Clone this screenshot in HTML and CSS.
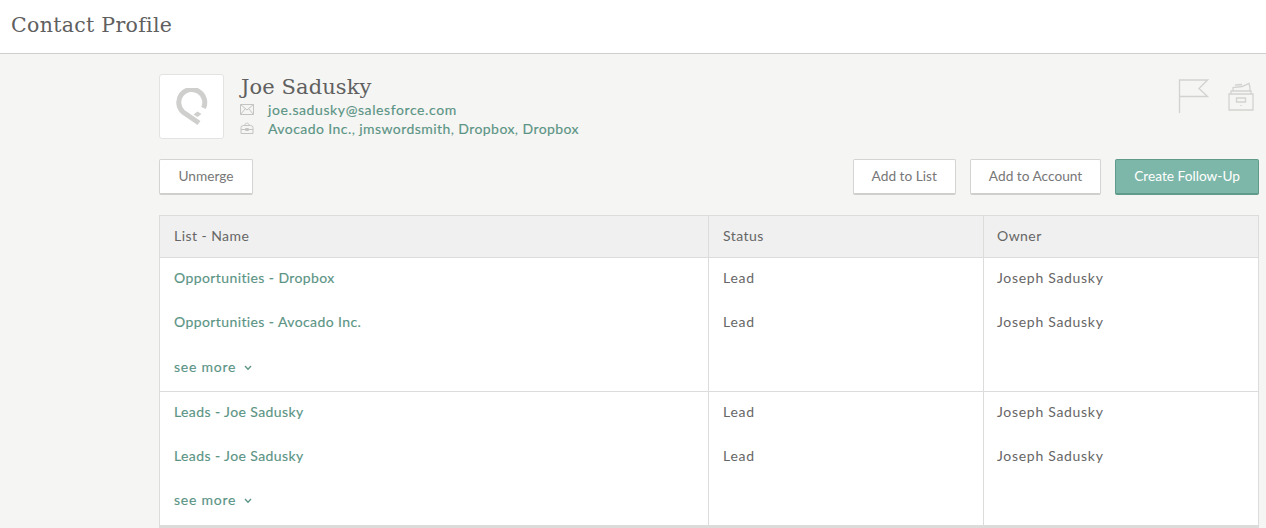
FILE: index.html
```html
<!DOCTYPE html>
<html lang="en">
<head>
<meta charset="utf-8">
<title>Contact Profile</title>
<link rel="stylesheet" href="styles.css">
</head>
<body>
<header class="topbar"><h1>Contact Profile</h1></header>
<main class="main">
  <section class="profile">
    <div class="avatar">
      <svg width="34" height="38" viewBox="0 0 34 38" fill="none">
        <path d="M24 35 L8 24 A13 13 0 1 1 28.500 20" stroke="#cfcfcd" stroke-width="5"/>
        <path d="M18.500 26.500 L22.500 23.500 L26.500 26 L22.500 29 Z" fill="#cfcfcd"/>
      </svg>
    </div>
    <div class="identity">
      <h2>Joe Sadusky</h2>
      <div class="line email">
        <svg class="small-icon" width="14" height="11" viewBox="0 0 14 11" fill="none" stroke="#c4c4c2"><path d="M.5 .5h13v10H.5z M.5 .5 7 6l6.500-5.500 M.5 10.500 5.300 4.600 M13.500 10.500 8.700 4.600"/></svg>
        <a>joe.sadusky@salesforce.com</a>
      </div>
      <div class="line">
        <svg class="small-icon" width="13" height="12" viewBox="0 0 13 12" fill="none" stroke="#c4c4c2"><path d="M.5 5.500Q.5 3.500 3 3.500h7q2.500 0 2.500 2v6H.5z M.5 7.500h12 M3.500 3.500 6 1h1L9.500 3.500 M5 6.500h3v2H5z"/></svg>
        <span class="links"><a>Avocado Inc.</a>, <a>jmswordsmith</a>, <a>Dropbox</a>, <a>Dropbox</a></span>
      </div>
    </div>
    <div class="status-icons">
      <svg width="31" height="34" viewBox="0 0 31 34" fill="none" stroke="#d2d2d0" stroke-width="1.300"><path d="M1.500 34V1H29.500L21 9.500 29.500 17.500H1.500"/></svg>
      <svg width="26" height="29" viewBox="0 0 26 29" fill="none" stroke="#d2d2d0" stroke-width="1.300"><path d="M1 12h24v16H1z M3 12V9h20v3 M5 9V5.500l9-1 7-3 1 4V9 M7 3l7-.500 M8.500 16h9v4h-9z M13 23v1"/></svg>
    </div>
  </section>
  <section class="actions">
    <button class="btn unmerge">Unmerge</button>
    <div class="actions-right">
      <button class="btn">Add to List</button>
      <button class="btn">Add to Account</button>
      <button class="btn primary">Create Follow-Up</button>
    </div>
  </section>
  <section class="table">
    <div class="row head"><div>List - Name</div><div>Status</div><div>Owner</div></div>
    <div class="group">
      <div class="row"><div><a>Opportunities - Dropbox</a></div><div>Lead</div><div>Joseph Sadusky</div></div>
      <div class="row"><div><a>Opportunities - Avocado Inc.</a></div><div>Lead</div><div>Joseph Sadusky</div></div>
      <div class="row more"><div><a class="see">see more <svg width="8" height="6" viewBox="0 0 8 6" fill="none" stroke="#5b9485" stroke-width="1.300"><path d="M1 1 4 4.300 7 1"/></svg></a></div><div></div><div></div></div>
    </div>
    <div class="group last">
      <div class="row"><div><a>Leads - Joe Sadusky</a></div><div>Lead</div><div>Joseph Sadusky</div></div>
      <div class="row"><div><a>Leads - Joe Sadusky</a></div><div>Lead</div><div>Joseph Sadusky</div></div>
      <div class="row more"><div><a class="see">see more <svg width="8" height="6" viewBox="0 0 8 6" fill="none" stroke="#5b9485" stroke-width="1.300"><path d="M1 1 4 4.300 7 1"/></svg></a></div><div></div><div></div></div>
    </div>
  </section>
</main>
</body>
</html>
```
FILE: styles.css
```css
* { box-sizing: border-box; }
html, body { margin: 0; height: 100%; overflow: hidden; }
body { background: #f5f5f3; font-family: Lato, "Liberation Sans", sans-serif; color: #555; }
.topbar { height: 54px; background: #fff; border-bottom: 1px solid #cfcfcd; padding: 11px 0 0 11px; }
h1, h2 { margin: 0; font-family: "DejaVu Serif", serif; font-weight: 400; color: #606060; }
h1 { font-size: 20.500px; line-height: 28px; letter-spacing: .3px; }
h2 { font-size: 21px; line-height: 26px; letter-spacing: .1px; padding-left: 1px; }
a { color: #5b9485; -webkit-text-stroke: .15px #5b9485; }
.main { padding: 20px 7px 0 159px; }
.profile { display: flex; height: 65px; }
.avatar { width: 65px; height: 65px; background: #fff; border: 1px solid #e3e3e1; border-radius: 3px; display: flex; align-items: center; justify-content: center; }
.identity { margin-left: 16px; flex: 1; }
.line { display: flex; align-items: center; height: 18px; font-size: 14px; letter-spacing: .43px; }
.line + .line { margin-top: 1px; }
.email { letter-spacing: .6px; }
.small-icon { width: 14px; margin-right: 14px; flex: none; }
.links { color: #5b9485; }
.status-icons { display: flex; align-items: flex-start; gap: 19px; padding-top: 5px; }
.status-icons svg:last-child { margin-right: 5px; margin-top: 3px; }
.actions { display: flex; justify-content: space-between; margin-top: 20px; }
.actions-right { display: flex; gap: 14px; }
.btn { height: 36px; padding: 0 18px 2px; background: #fff; border: 1px solid #d4d4d2; border-bottom: 2px solid #cfcfcd; border-radius: 2px; font: 400 13.700px Lato, "Liberation Sans", sans-serif; color: #777; }
.unmerge { padding: 0 18.500px 2px; }
.primary { background: #7db7a9; border-color: #5f9a8b; color: #fff; }
.table { margin-top: 20px; border: 1px solid #dcdcda; border-bottom: 3px solid #dcdcda; background: #fff; font-size: 14px; letter-spacing: .7px; color: #666; }
.row { display: grid; grid-template-columns: 549px 275px 1fr; }
.row > div { padding: 10px 14px 14px; line-height: 20px; border-right: 1px solid #dcdcda; }
.row > div:last-child { border-right: 0; padding-left: 13px; }
.head { background: #f0f0f0; border-bottom: 1px solid #dcdcda; letter-spacing: .45px; }
.head > div { padding: 10px 14px 11px; }
.group + .group { border-top: 1px solid #dcdcda; }
.more > div { padding-top: 11px; }
.last .more > div { padding-top: 10px; padding-bottom: 15px; }
.see svg { margin-left: 4px; vertical-align: 1px; }
.row a { letter-spacing: .4px; }
.row a.see { letter-spacing: .75px; }
```
